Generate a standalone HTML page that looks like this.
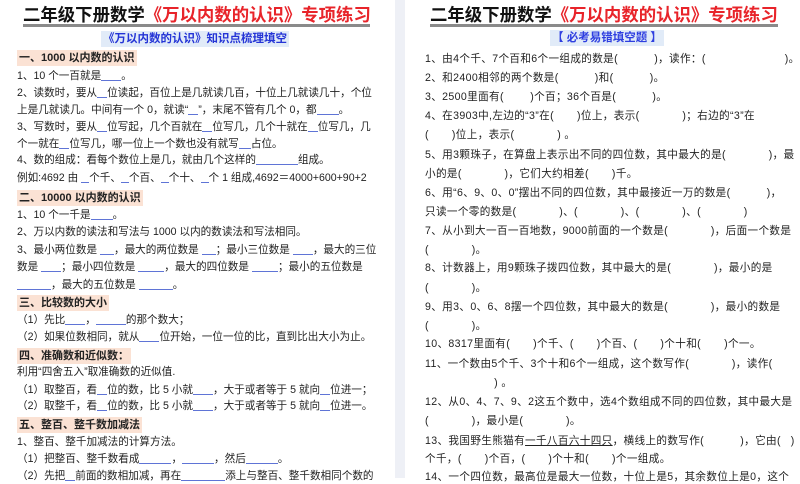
<!DOCTYPE html>
<html><head><meta charset="utf-8"><style>
*{margin:0;padding:0;box-sizing:border-box}
body{width:800px;height:478px;overflow:hidden;background:#fff;font-family:"Liberation Sans","Noto Sans CJK SC",sans-serif;color:#222;position:relative}
.gap{position:absolute;left:395px;top:0;width:10px;height:478px;background:#eef0f6}
.t{position:absolute;font-size:17.4px;font-weight:bold;white-space:nowrap;color:#111;line-height:22px}
.t span{color:#e8242a}
.ul{position:absolute;height:3px;background:#8a8a8a}
.sub{position:absolute;font-size:11.5px;font-weight:bold;color:#2434d6;background:#e1ebf8;line-height:16px;padding:0 2px;white-space:nowrap}
.h{position:absolute;left:17px;font-size:11px;font-weight:bold;background:#fbe2d4;line-height:16px;padding:0 2px;white-space:nowrap;color:#222}
.l{position:absolute;font-size:10.6px;line-height:14px;white-space:pre;color:#222}
.r{left:425px;font-size:10.6px;letter-spacing:0.35px}
.b{display:inline-block;border-bottom:1px solid #5f74d6;height:12px;vertical-align:-2px}
</style></head><body>
<div class="gap"></div>

<div class="t" style="left:23px;top:4px">二年级下册数学<span>《万以内数的认识》专项练习</span></div>
<div class="ul" style="left:23px;top:24px;width:347px"></div>
<div class="sub" style="left:101px;top:31px">《万以内数的认识》知识点梳理填空</div>
<div class="h" style="top:50px">一、1000 以内数的认识</div>
<div class="l" style="left:17px;top:69px">1、10 个一百就是<span class="b" style="width:20px"></span>。</div>
<div class="l" style="left:17px;top:86px">2、读数时，要从<span class="b" style="width:10px"></span>位读起，百位上是几就读几百，十位上几就读几十，个位</div>
<div class="l" style="left:17px;top:103px">上是几就读几。中间有一个 0，就读“<span class="b" style="width:10px"></span>”，末尾不管有几个 0，都<span class="b" style="width:22px"></span>。</div>
<div class="l" style="left:17px;top:120px">3、写数时，要从<span class="b" style="width:10px"></span>位写起，几个百就在<span class="b" style="width:10px"></span>位写几，几个十就在<span class="b" style="width:10px"></span>位写几，几</div>
<div class="l" style="left:17px;top:137px">个一就在<span class="b" style="width:10px"></span>位写几，哪一位上一个数也没有就写<span class="b" style="width:12px"></span>占位。</div>
<div class="l" style="left:17px;top:153px">4、数的组成：看每个数位上是几，就由几个这样的<span class="b" style="width:42px"></span>组成。</div>
<div class="l" style="left:17px;top:171px">例如:4692 由 <span class="b" style="width:8px"></span>个千、<span class="b" style="width:8px"></span>个百、<span class="b" style="width:8px"></span>个十、<span class="b" style="width:8px"></span>个 1 组成,4692＝4000+600+90+2</div>
<div class="h" style="top:190px">二、10000 以内数的认识</div>
<div class="l" style="left:17px;top:208px">1、10 个一千是<span class="b" style="width:22px"></span>。</div>
<div class="l" style="left:17px;top:225px">2、万以内数的读法和写法与 1000 以内的数读法和写法相同。</div>
<div class="l" style="left:17px;top:243px">3、最小两位数是 <span class="b" style="width:14px"></span>，最大的两位数是 <span class="b" style="width:14px"></span>；最小三位数是 <span class="b" style="width:20px"></span>，最大的三位</div>
<div class="l" style="left:17px;top:260px">数是 <span class="b" style="width:20px"></span>；最小四位数是 <span class="b" style="width:26px"></span>，最大的四位数是 <span class="b" style="width:26px"></span>；最小的五位数是</div>
<div class="l" style="left:17px;top:278px"><span class="b" style="width:34px"></span>，最大的五位数是 <span class="b" style="width:34px"></span>。</div>
<div class="h" style="top:295px">三、比较数的大小</div>
<div class="l" style="left:17px;top:313px">（1）先比<span class="b" style="width:20px"></span>，<span class="b" style="width:30px"></span>的那个数大；</div>
<div class="l" style="left:17px;top:330px">（2）如果位数相同，就从<span class="b" style="width:20px"></span>位开始，一位一位的比，直到比出大小为止。</div>
<div class="h" style="top:348px">四、准确数和近似数：</div>
<div class="l" style="left:17px;top:365px">利用“四舍五入”取准确数的近似值.</div>
<div class="l" style="left:17px;top:383px">（1）取整百，看<span class="b" style="width:10px"></span>位的数，比 5 小就<span class="b" style="width:20px"></span>，大于或者等于 5 就向<span class="b" style="width:10px"></span>位进一；</div>
<div class="l" style="left:17px;top:399px">（2）取整千，看<span class="b" style="width:10px"></span>位的数，比 5 小就<span class="b" style="width:20px"></span>，大于或者等于 5 就向<span class="b" style="width:10px"></span>位进一。</div>
<div class="h" style="top:417px">五、整百、整千数加减法</div>
<div class="l" style="left:17px;top:435px">1、整百、整千加减法的计算方法。</div>
<div class="l" style="left:17px;top:452px">（1）把整百、整千数看成<span class="b" style="width:32px"></span>，<span class="b" style="width:32px"></span>，然后<span class="b" style="width:32px"></span>。</div>
<div class="l" style="left:17px;top:469px">（2）先把<span class="b" style="width:10px"></span>前面的数相加减，再在<span class="b" style="width:44px"></span>添上与整百、整千数相同个数的</div>

<div class="t" style="left:430px;top:4px">二年级下册数学<span>《万以内数的认识》专项练习</span></div>
<div class="ul" style="left:430px;top:24px;width:348px"></div>
<div class="sub" style="left:550px;top:30px;color:#2d3ee0">【 必考易错填空题 】</div>
<div class="l r" style="top:52px">1、由4个千、7个百和6个一组成的数是(           )，读作：(                        )。</div>
<div class="l r" style="top:71px">2、和2400相邻的两个数是(           )和(           )。</div>
<div class="l r" style="top:90px">3、2500里面有(        )个百；36个百是(           )。</div>
<div class="l r" style="top:109px">4、在3903中,左边的“3”在(       )位上，表示(             )；右边的“3”在</div>
<div class="l r" style="top:128px">(       )位上，表示(             ) 。</div>
<div class="l r" style="top:148px">5、用3颗珠子，在算盘上表示出不同的四位数，其中最大的是(             )，最</div>
<div class="l r" style="top:167px">小的是(             )，它们大约相差(       )千。</div>
<div class="l r" style="top:186px">6、用“6、9、0、0”摆出不同的四位数，其中最接近一万的数是(           )，</div>
<div class="l r" style="top:205px">只读一个零的数是(             )、(             )、(             )、(             )</div>
<div class="l r" style="top:224px">7、从小到大一百一百地数，9000前面的一个数是(             )，后面一个数是</div>
<div class="l r" style="top:243px">(             )。</div>
<div class="l r" style="top:261px">8、计数器上，用9颗珠子拨四位数，其中最大的是(             )，最小的是</div>
<div class="l r" style="top:281px">(             )。</div>
<div class="l r" style="top:300px">9、用3、0、6、8摆一个四位数，其中最大的数是(             )，最小的数是</div>
<div class="l r" style="top:319px">(             )。</div>
<div class="l r" style="top:337px">10、8317里面有(       )个千、(       )个百、(       )个十和(       )个一。</div>
<div class="l r" style="top:357px">11、一个数由5个千、3个十和6个一组成，这个数写作(             )，读作(</div>
<div class="l r" style="top:376px">                     ) 。</div>
<div class="l r" style="top:395px">12、从0、4、7、9、2这五个数中，选4个数组成不同的四位数，其中最大是</div>
<div class="l r" style="top:414px">(             )，最小是(             )。</div>
<div class="l r" style="top:434px">13、我国野生熊猫有<span style="text-decoration:underline">一千八百六十四只</span>，横线上的数写作(           )，它由(   )</div>
<div class="l r" style="top:452px">个千，(       )个百，(       )个十和(       )个一组成。</div>
<div class="l r" style="top:470px">14、一个四位数，最高位是最大一位数，十位上是5，其余数位上是0，这个</div>
</body></html>
